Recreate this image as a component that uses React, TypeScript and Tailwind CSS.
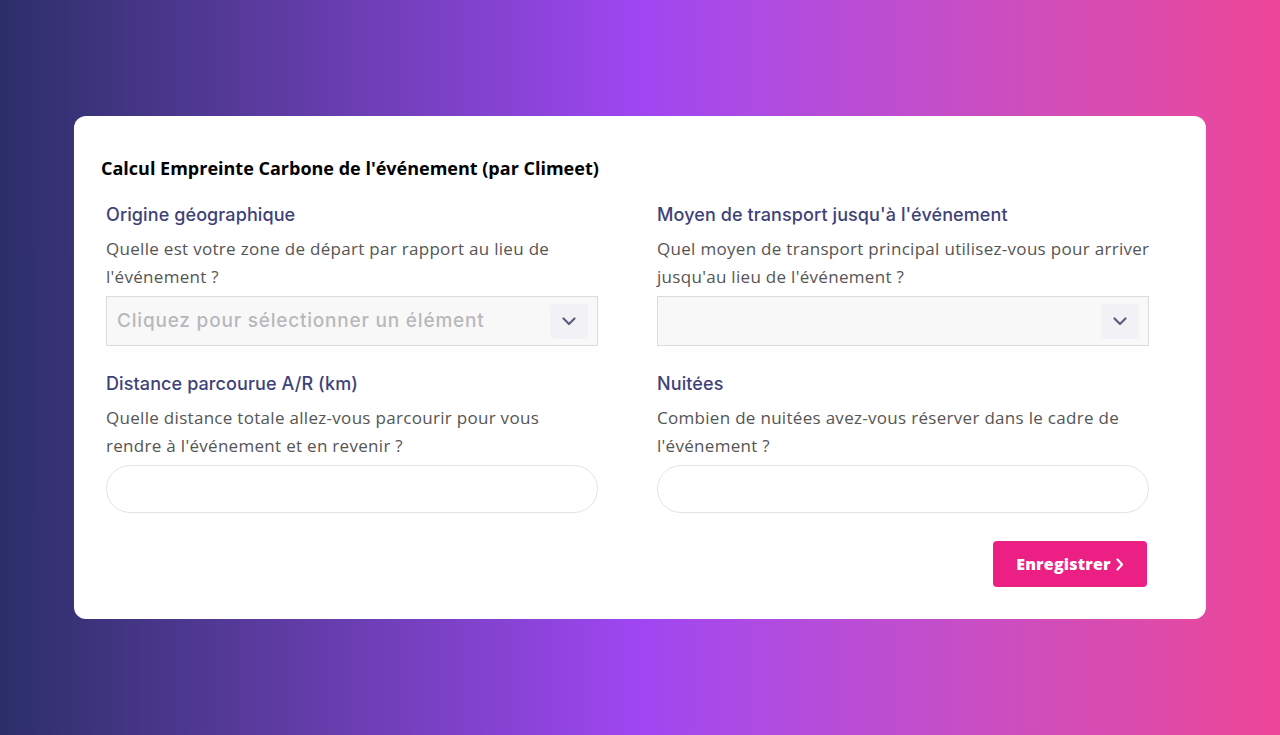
import React from 'react';

const fields = [
  {
    label: 'Origine géographique',
    help: ['Quelle est votre zone de départ par rapport au lieu de', "l'événement ?"],
    kind: 'select',
    placeholder: 'Cliquez pour sélectionner un élément',
  },
  {
    label: "Moyen de transport jusqu'à l'événement",
    help: ['Quel moyen de transport principal utilisez-vous pour arriver', "jusqu'au lieu de l'événement ?"],
    kind: 'select',
    placeholder: '',
  },
  {
    label: 'Distance parcourue A/R (km)',
    help: ['Quelle distance totale allez-vous parcourir pour vous', "rendre à l'événement et en revenir ?"],
    kind: 'input',
  },
  {
    label: 'Nuitées',
    help: ['Combien de nuitées avez-vous réserver dans le cadre de', "l'événement ?"],
    kind: 'input',
  },
];

const Chevron = () => (
  <svg width="14" height="9" viewBox="0 0 14 9" fill="none">
    <path d="M1.5 1.5 7 7l5.5-5.5" stroke="#5a5f7e" strokeWidth="2.2" strokeLinecap="round" strokeLinejoin="round" />
  </svg>
);

export default function App() {
  return (
    <div className="w-full h-[735px] flex items-center justify-center bg-gradient-to-r from-[#2b2f69] via-[#a046f2] to-[#ee4597]">
      <div className="w-[1132px] h-[503px] bg-white rounded-[12px] pt-[40px] pl-[32px] pr-[57px] pb-[32px] flex flex-col">
        <h1 className="-ml-[5px] text-[18px] leading-[24px] font-bold text-black font-['Open_Sans',sans-serif]">
          Calcul Empreinte Carbone de l'événement (par Climeet)
        </h1>
        <div className="mt-[23px] grid grid-cols-[492px_492px] gap-x-[59px] gap-y-[26px]">
          {fields.map((f) => (
            <div key={f.label} className="flex flex-col">
              <label className="text-[18px] leading-[24px] font-medium text-[#3e4279] font-['Inter',sans-serif] tracking-[0.1px]">
                {f.label}
              </label>
              <p className="mt-[8px] text-[17px] leading-[28px] text-[#555555] font-['Open_Sans',sans-serif] tracking-[0.3px] whitespace-nowrap">
                {f.help[0]}
                <br />
                {f.help[1]}
              </p>
              {f.kind === 'select' ? (
                <div className="mt-[5px] h-[50px] bg-[#f8f8f8] border border-[#dcdcdc] flex items-center justify-between pl-[10px] pr-[9px]">
                  <span className="text-[19px] text-[#b8b8bc] font-medium font-['Inter',sans-serif] tracking-[0.8px]">
                    {f.placeholder}
                  </span>
                  <span className="w-[38px] h-[35px] rounded-[4px] bg-[#f2f1f5] flex items-center justify-center">
                    <Chevron />
                  </span>
                </div>
              ) : (
                <input
                  type="text"
                  className="mt-[5px] h-[48px] rounded-full border border-[#e3e3e3] bg-white px-5 outline-none"
                />
              )}
            </div>
          ))}
        </div>
        <div className="mt-[28px] flex justify-end pr-[2px]">
          <button className="w-[154px] h-[46px] rounded-[4px] bg-[#ec1f84] text-white text-[16px] font-extrabold font-['Open_Sans',sans-serif] tracking-[0.2px] flex items-center justify-center gap-[5px]">
            Enregistrer
            <svg width="8" height="13" viewBox="0 0 8 13" fill="none">
              <path d="M1.5 1.5 6 6.5l-4.5 5" stroke="white" strokeWidth="2.2" strokeLinecap="round" strokeLinejoin="round" />
            </svg>
          </button>
        </div>
      </div>
    </div>
  );
}
